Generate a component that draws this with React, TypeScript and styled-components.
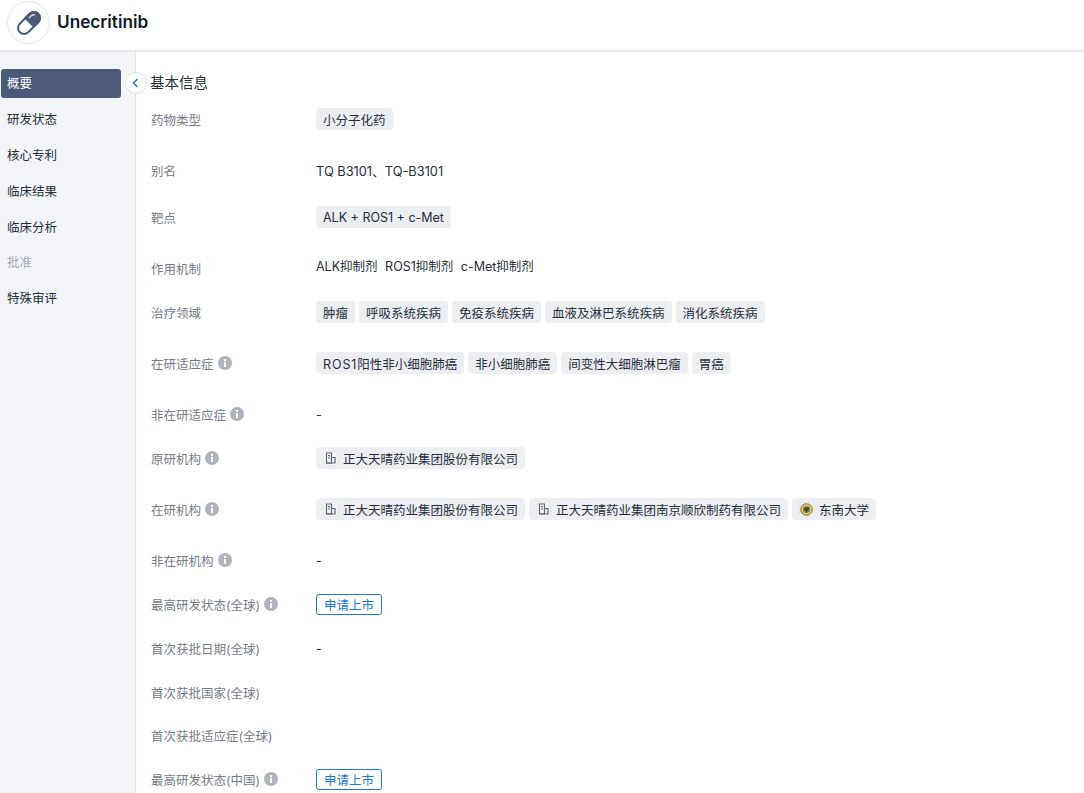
import React from "react";
import styled, { createGlobalStyle } from "styled-components";

const Global = createGlobalStyle`
  html, body { margin: 0; padding: 0; background: #fff; }
  body { font-family: Inter, "Noto Sans CJK SC", sans-serif; font-size: 12.5px; color: #1f2633; }
  #root { height: 793px; overflow: hidden; }
`;

const Page = styled.div`display: flex; flex-direction: column; height: 793px; overflow: hidden;`;
const Header = styled.header`
  flex: none; box-sizing: border-box; height: 52px; display: flex; align-items: flex-start; gap: 7px; padding: 1px 0 0 7px;
  border-bottom: 2px solid #e6e7ea; background: #fff;
`;
const Avatar = styled.div`
  width: 41px; height: 41px; border: 1px solid #e4e6ea; border-radius: 50%;
  display: flex; align-items: center; justify-content: center; background: #fff;
`;
const Title = styled.h1`margin: 0; font-size: 17.2px; line-height: 42px; font-weight: 600; color: #10182a;`;
const Body = styled.div`flex: 1; display: flex; min-height: 0; position: relative;`;
const Side = styled.nav`
  flex: none; width: 136px; box-sizing: border-box; background: #f3f4f7; border-right: 1px solid #dfe1e6;
  padding: 17px 14px 0 1px; display: flex; flex-direction: column; gap: 7px;
`;
const NavItem = styled.div<{ $active?: boolean; $muted?: boolean }>`
  height: 29px; line-height: 29px; padding-left: 6px; border-radius: 3px; font-size: 12.5px;
  background: ${p => (p.$active ? "#4a5a78" : "transparent")};
  color: ${p => (p.$active ? "#fff" : p.$muted ? "#a5abb7" : "#262d3b")};
  margin-top: ${p => (p.$muted ? -1 : 0)}px;
`;
const Collapse = styled.button`
  position: absolute; left: 125px; top: 20px; width: 22px; height: 22px; border-radius: 50%;
  border: 1px solid #dcdfe5; background: #fff; padding: 0; display: flex; align-items: center; justify-content: center;
`;
const Main = styled.main`flex: 1; padding: 20px 0 0 14px; min-width: 0;`;
const Heading = styled.h2`margin: 0 0 14px; font-size: 14.5px; font-weight: 400; line-height: 22px; color: #262d3b;`;
const Rows = styled.div`display: flex; flex-direction: column; padding-left: 1px;`;
const Row = styled.div<{ $h: number }>`display: flex; height: ${p => p.$h}px; align-items: flex-start;`;
const Label = styled.div`
  flex: none; width: 165px; height: 22px; display: flex; align-items: center; gap: 4px;
  font-size: 12.5px; color: #747c8c;
`;
const Value = styled.div<{ $up?: number }>`
  display: flex; align-items: center; gap: 4px; min-height: 22px; font-size: 12.5px; color: #262d3b;
  margin-top: ${p => -(p.$up ?? 0)}px;
`;
const Plain = styled.span`font-size: 12.8px;`;
const Chip = styled.span`
  display: inline-flex; align-items: center; gap: 5px; height: 22px; padding: 0 7px; border-radius: 4px;
  background: #eceef2; font-size: 12.5px; color: #262d3b; white-space: nowrap;
`;
const Wide = styled.span`letter-spacing: 0.9px;`;
const IconBox = styled.span`
  width: 15px; height: 15px; border-radius: 3px; background: #f6f7f9; border: 1px solid #e6e8ec;
  box-sizing: border-box; display: inline-flex; align-items: center; justify-content: center;
`;
const Status = styled.span`
  display: inline-flex; align-items: center; justify-content: center; box-sizing: border-box;
  width: 66px; height: 21px; border: 1px solid #1b78d9; border-radius: 3px; color: #1b78d9; font-size: 12.5px;
`;
const Mechanism = styled.span`font-size: 12.5px; color: #262d3b; margin-right: 3.5px;`;

const Info = () => (
  <svg width="14" height="14" viewBox="0 0 14 14" aria-hidden="true">
    <circle cx="7" cy="7" r="7" fill="#adb3bf" />
    <rect x="6" y="6" width="2" height="5" fill="#fff" />
    <rect x="6" y="3" width="2" height="2" fill="#fff" />
  </svg>
);
const Building = () => (
  <svg width="11" height="12" viewBox="0 0 11 12" fill="none" stroke="#5d6678" strokeWidth="1.2" aria-hidden="true">
    <path d="M1.5 11V1h5v10z" />
    <path d="M6.5 5.5h3.5V11H1" />
    <path d="M3 3.7h2M3 6h2" />
  </svg>
);
const Seu = () => (
  <svg width="13" height="13" viewBox="0 0 13 13" aria-hidden="true">
    <circle cx="6.5" cy="6.5" r="6.5" fill="#b8973e" />
    <circle cx="6.5" cy="6.5" r="4.8" fill="#e8dfb8" />
    <circle cx="6.5" cy="6.5" r="3.8" fill="#8a8240" />
    <path d="M3.6 4.8h5.8L6.5 9.6z" fill="#3f4a2c" />
  </svg>
);
const Pill = () => (
  <svg width="30" height="30" viewBox="0 0 30 30" aria-hidden="true">
    <g transform="rotate(-45 15 15)">
      <rect x="2" y="9" width="26" height="12" rx="6" fill="#fff" stroke="#4a5a78" strokeWidth="2" />
      <path d="M15 8h7a7 7 0 0 1 0 14h-7z" fill="#4a5a78" />
      <path d="M19 11.5h3a3 3 0 0 1 2.6 1.5" fill="none" stroke="#dfe3ea" strokeWidth="1.4" strokeLinecap="round" />
    </g>
  </svg>
);

type Org = "b" | "s";
const OrgChip = ({ name, kind = "b" }: { name: string; kind?: Org }) => (
  <Chip><IconBox>{kind === "b" ? <Building /> : <Seu />}</IconBox>{name}</Chip>
);
const Tags = ({ items }: { items: string[] }) => <>{items.map(t => <Chip key={t}>{t}</Chip>)}</>;

const nav = ["研发状态", "核心专利", "临床结果", "临床分析", "批准", "特殊审评"];
const ZD = "正大天晴药业集团股份有限公司";

export default function App() {
  return (
    <Page>
      <Global />
      <Header><Avatar><Pill /></Avatar><Title>Unecritinib</Title></Header>
      <Body>
        <Side>
          <NavItem $active>概要</NavItem>
          {nav.map(n => <NavItem key={n} $muted={n === "批准"}>{n}</NavItem>)}
        </Side>
        <Collapse aria-label="收起">
          <svg width="12" height="12" viewBox="0 0 12 12" fill="none" stroke="#1b78d9" strokeWidth="1.5"><path d="M7.5 2 3.5 6l4 4" /></svg>
        </Collapse>
        <Main>
          <Heading>基本信息</Heading>
          <Rows>
            <Row $h={51}><Label>药物类型</Label><Value><Tags items={["小分子化药"]} /></Value></Row>
            <Row $h={47}><Label>别名</Label><Value><Plain>TQ B3101、TQ-B3101</Plain></Value></Row>
            <Row $h={51}><Label>靶点</Label><Value><Tags items={["ALK + ROS1 + c-Met"]} /></Value></Row>
            <Row $h={44}><Label>作用机制</Label><Value $up={3}><Mechanism>ALK抑制剂</Mechanism><Mechanism>ROS1抑制剂</Mechanism><Mechanism>c-Met抑制剂</Mechanism></Value></Row>
            <Row $h={51}><Label>治疗领域</Label><Value><Tags items={["肿瘤", "呼吸系统疾病", "免疫系统疾病", "血液及淋巴系统疾病", "消化系统疾病"]} /></Value></Row>
            <Row $h={51}><Label>在研适应症<Info /></Label><Value><Chip><span><Wide>ROS1</Wide>阳性非小细胞肺癌</span></Chip><Tags items={["非小细胞肺癌", "间变性大细胞淋巴瘤", "胃癌"]} /></Value></Row>
            <Row $h={44}><Label>非在研适应症<Info /></Label><Value>-</Value></Row>
            <Row $h={51}><Label>原研机构<Info /></Label><Value><OrgChip name={ZD} /></Value></Row>
            <Row $h={51}><Label>在研机构<Info /></Label><Value><OrgChip name={ZD} /><OrgChip name="正大天晴药业集团南京顺欣制药有限公司" /><OrgChip name="东南大学" kind="s" /></Value></Row>
            <Row $h={44}><Label>非在研机构<Info /></Label><Value>-</Value></Row>
            <Row $h={44}><Label>最高研发状态(全球)<Info /></Label><Value><Status>申请上市</Status></Value></Row>
            <Row $h={44}><Label>首次获批日期(全球)</Label><Value>-</Value></Row>
            <Row $h={43}><Label>首次获批国家(全球)</Label><Value /></Row>
            <Row $h={44}><Label>首次获批适应症(全球)</Label><Value /></Row>
            <Row $h={44}><Label>最高研发状态(中国)<Info /></Label><Value><Status>申请上市</Status></Value></Row>
          </Rows>
        </Main>
      </Body>
    </Page>
  );
}
